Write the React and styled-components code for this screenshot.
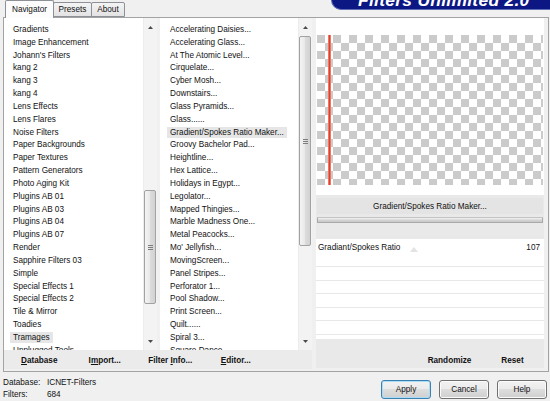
import React from "react";
import styled, { createGlobalStyle } from "styled-components";

const GlobalStyle = createGlobalStyle`
  html, body {
    margin: 0;
    padding: 0;
    background: #f0f0f0;
  }
  body {
    font-family: "Liberation Sans", Arial, sans-serif;
    font-size: 8.2px;
    color: #111;
  }
`;

const categories = [
  "Gradients",
  "Image Enhancement",
  "Johann's Filters",
  "kang 2",
  "kang 3",
  "kang 4",
  "Lens Effects",
  "Lens Flares",
  "Noise Filters",
  "Paper Backgrounds",
  "Paper Textures",
  "Pattern Generators",
  "Photo Aging Kit",
  "Plugins AB 01",
  "Plugins AB 03",
  "Plugins AB 04",
  "Plugins AB 07",
  "Render",
  "Sapphire Filters 03",
  "Simple",
  "Special Effects 1",
  "Special Effects 2",
  "Tile & Mirror",
  "Toadies",
  "Tramages",
  "Unplugged Tools",
];

const filters = [
  "Accelerating Daisies...",
  "Accelerating Glass...",
  "At The Atomic Level...",
  "Cirquelate...",
  "Cyber Mosh...",
  "Downstairs...",
  "Glass Pyramids...",
  "Glass......",
  "Gradient/Spokes Ratio Maker...",
  "Groovy Bachelor Pad...",
  "Heightline...",
  "Hex Lattice...",
  "Holidays in Egypt...",
  "Legolator...",
  "Mapped Thingies...",
  "Marble Madness One...",
  "Metal Peacocks...",
  "Mo' Jellyfish...",
  "MovingScreen...",
  "Panel Stripes...",
  "Perforator 1...",
  "Pool Shadow...",
  "Print Screen...",
  "Quilt......",
  "Spiral 3...",
  "Square Dance...",
];

const Window = styled.div`
  width: 550px;
  height: 401px;
  overflow: hidden;
  background: #f0f0f0;
  display: flex;
  flex-direction: column;
`;

const TopBar = styled.div`
  height: 17px;
  display: flex;
  padding-left: 5px;
  position: relative;
  z-index: 1;
`;

const Tabs = styled.div`
  display: flex;
  align-items: flex-end;
  height: 17px;
`;

const Tab = styled.div`
  box-sizing: border-box;
  width: ${(p) => p.$w}px;
  height: ${(p) => (p.$active ? 18 : 15)}px;
  margin-bottom: ${(p) => (p.$active ? -1 : 0)}px;
  margin-left: ${(p) => (p.$first ? 0 : -1)}px;
  border: 1px solid #8d9096;
  border-bottom: ${(p) => (p.$active ? "none" : "1px solid #8d9096")};
  border-radius: 2px 2px 0 0;
  background: ${(p) =>
    p.$active ? "#fcfcfc" : "linear-gradient(#f4f4f4, #e3e3e3)"};
  display: flex;
  align-items: center;
  justify-content: center;
  padding-bottom: ${(p) => (p.$active ? 1 : 0)}px;
  font-size: 8.2px;
  color: #111;
`;

const Banner = styled.div`
  margin-left: auto;
  width: 219px;
  height: 10px;
  overflow: hidden;
  box-sizing: border-box;
  background: #0c1783;
  border-bottom: 1px solid #5f6cb6;
  border-left: 1px solid #5f6cb6;
  border-bottom-left-radius: 10px;
  padding-left: 26px;
`;

const BannerText = styled.div`
  margin-top: -8px;
  font-family: "Liberation Sans", Arial, sans-serif;
  font-weight: 700;
  font-style: italic;
  font-size: 17.4px;
  line-height: 1;
  letter-spacing: 0.3px;
  color: #fff;
  white-space: nowrap;
`;

const Frame = styled.div`
  box-sizing: border-box;
  margin-left: 3px;
  width: 546px;
  height: 355px;
  border: 1px solid #a3a3a3;
  background: #f0f0f0;
  display: flex;
  padding-right: 3px;
`;

const LeftPane = styled.div`
  width: 308px;
  display: flex;
  flex-direction: column;
`;

const Lists = styled.div`
  height: 332px;
  display: flex;
  gap: 3px;
`;

const ListBox = styled.div`
  width: ${(p) => p.$w}px;
  display: flex;
  background: #fff;
`;

const List = styled.div`
  flex: 1;
  overflow: hidden;
  padding: 6px 0 0 ${(p) => p.$pad}px;
`;

const Item = styled.div`
  height: 12.83px;
  line-height: 12.83px;
  white-space: nowrap;
`;

const ItemLabel = styled.span`
  padding: 1px 3px;
  margin-left: -3px;
  background: ${(p) => (p.$sel ? "#e6e6e6" : "transparent")};
`;

const Track = styled.div`
  width: 14px;
  display: flex;
  flex-direction: column;
  background: #f3f3f3;
  border-left: 1px solid #ececec;
  box-sizing: border-box;
`;

const Arrow = styled.div`
  height: 18px;
  display: flex;
  align-items: center;
  justify-content: center;
`;

const ThumbSpace = styled.div`
  height: ${(p) => p.$h}px;
`;

const Thumb = styled.div`
  box-sizing: border-box;
  height: ${(p) => p.$h}px;
  margin: 0 1px 0 0;
  border: 1px solid #a2a2a2;
  border-radius: 2px;
  background: linear-gradient(to right, #f4f4f4, #e8e8e8 50%, #dcdcdc 51%, #d2d2d2);
  display: flex;
  align-items: center;
  justify-content: center;
`;

const Grip = styled.div`
  width: 5px;
  height: 5px;
  background: repeating-linear-gradient(#7d7d7d 0 1px, transparent 1px 2px);
`;

const Rest = styled.div`
  flex: 1;
`;

const ActionBar = styled.div`
  height: 19px;
  display: grid;
  grid-template-columns: repeat(4, 65.5px);
  padding-left: 2.5px;
  background: #ebebeb;
  align-items: center;
`;

const ActionButton = styled.div`
  text-align: center;
  font-weight: 700;
  font-size: 8.2px;
  line-height: 19px;
  padding-top: 1px;
  color: #111;
  white-space: nowrap;
`;

const Key = styled.span`
  text-decoration: underline;
`;

const RightPane = styled.div`
  margin-left: 4px;
  width: 228px;
  height: 350px;
  display: flex;
  flex-direction: column;
`;

const Preview = styled.div`
  height: 177px;
  box-sizing: border-box;
  background: #fff;
  padding: 17px 1px 0 1px;
`;

const Checker = styled.div`
  height: 150px;
  display: flex;
  background: repeating-conic-gradient(#fff 0 25%, #cbcbcb 0 50%) 0 0 / 16px 16px;
`;

const RedLine = styled.div`
  width: 3px;
  margin: 0 0 0 11px;
  height: 150px;
  background: linear-gradient(to right, #f7927f, #e2402e, #f7927f);
`;

const ControlArea = styled.div`
  height: 44px;
  box-sizing: border-box;
  background: #e9e9e9;
  padding: 3px 1px 0 1px;
  display: flex;
  flex-direction: column;
`;

const FilterButton = styled.div`
  height: 16px;
  line-height: 17px;
  text-align: center;
  background: #e4e4e4;
  color: #111;
`;

const SliderTrack = styled.div`
  margin-top: 3px;
  height: 6px;
  box-sizing: border-box;
  border: 1px solid #a9a9a9;
  border-top-color: #c4c4c4;
  border-radius: 1px;
  background: linear-gradient(#f2f2f2, #d2d2d2 60%, #c8c8c8);
`;

const Params = styled.div`
  height: 100px;
  overflow: hidden;
  background: #fff;
`;

const ParamHead = styled.div`
  position: relative;
  height: 27px;
  box-sizing: border-box;
  padding: 2px 4px 0 2px;
`;

const ParamLine = styled.div`
  display: flex;
  justify-content: space-between;
  height: 13px;
  line-height: 13px;
`;

const ParamThumb = styled.div`
  position: absolute;
  left: 94px;
  top: 8px;
  width: 0;
  height: 0;
  border-left: 4px solid transparent;
  border-right: 4px solid transparent;
  border-bottom: 5px solid #e3e3e3;
`;

const ParamRow = styled.div`
  height: 13.6px;
  box-sizing: border-box;
  border-top: 1px solid #e8e8e8;
`;

const ParamBar = styled.div`
  height: 29px;
  background: #e9e9e9;
  display: flex;
  justify-content: flex-end;
  align-items: flex-end;
  padding-bottom: 1px;
  box-sizing: border-box;
`;

const BarButton = styled.div`
  width: 63px;
  line-height: 12px;
  text-align: center;
  font-weight: 700;
  color: #111;
`;

const Footer = styled.div`
  height: 29px;
  display: flex;
  padding: 0 3px;
`;

const Status = styled.div`
  padding-top: 5px;
  display: grid;
  grid-template-columns: 44px auto;
  grid-auto-rows: 12px;
  line-height: 12px;
`;

const Buttons = styled.div`
  margin-left: auto;
  margin-top: 8px;
  display: flex;
  gap: 8px;
`;

const DialogButton = styled.div`
  box-sizing: border-box;
  width: 50px;
  height: 19px;
  border: 1px solid ${(p) => (p.$default ? "#3c7fb1" : "#707070")};
  box-shadow: ${(p) => (p.$default ? "inset 0 0 0 1px #a8dcf7" : "inset 0 0 0 1px #fbfbfb")};
  border-radius: 3px;
  background: linear-gradient(#f2f2f2 0%, #ebebeb 45%, #dddddd 50%, #cfcfcf 100%);
  display: flex;
  align-items: center;
  justify-content: center;
  color: #111;
`;

const ArrowIcon = ({ down }) => (
  <svg width="5" height="3" viewBox="0 0 5 3">
    <path d={down ? "M0 0 L5 0 L2.5 3Z" : "M0 3 L2.5 0 L5 3Z"} fill="#4a4a4a" />
  </svg>
);

const ScrollBar = ({ offset, size }) => (
  <Track>
    <Arrow>
      <ArrowIcon />
    </Arrow>
    <ThumbSpace $h={offset} />
    <Thumb $h={size}>
      <Grip />
    </Thumb>
    <Rest />
    <Arrow>
      <ArrowIcon down />
    </Arrow>
  </Track>
);

const ItemList = ({ items, selected, pad }) => (
  <List $pad={pad}>
    {items.map((name) => (
      <Item key={name}>
        <ItemLabel $sel={name === selected}>{name}</ItemLabel>
      </Item>
    ))}
  </List>
);

export default function App() {
  return (
    <>
      <GlobalStyle />
      <Window>
        <TopBar>
          <Tabs>
            <Tab $w={49} $active $first>
              Navigator
            </Tab>
            <Tab $w={39}>Presets</Tab>
            <Tab $w={34}>About</Tab>
          </Tabs>
          <Banner>
            <BannerText>Filters Unlimited 2.0</BannerText>
          </Banner>
        </TopBar>

        <Frame>
          <LeftPane>
            <Lists>
              <ListBox $w={153}>
                <ItemList items={categories} selected="Tramages" pad={9} />
                <ScrollBar offset={154} size={114} />
              </ListBox>
              <ListBox $w={152}>
                <ItemList
                  items={filters}
                  selected="Gradient/Spokes Ratio Maker..."
                  pad={10}
                />
                <ScrollBar offset={0} size={210} />
              </ListBox>
            </Lists>
            <ActionBar>
              <ActionButton>
                <Key>D</Key>atabase
              </ActionButton>
              <ActionButton>
                I<Key>m</Key>port...
              </ActionButton>
              <ActionButton>
                Filter <Key>I</Key>nfo...
              </ActionButton>
              <ActionButton>
                <Key>E</Key>ditor...
              </ActionButton>
            </ActionBar>
          </LeftPane>

          <RightPane>
            <Preview>
              <Checker>
                <RedLine />
              </Checker>
            </Preview>
            <ControlArea>
              <FilterButton>Gradient/Spokes Ratio Maker...</FilterButton>
              <SliderTrack />
            </ControlArea>
            <Params>
              <ParamHead>
                <ParamLine>
                  <span>Gradiant/Spokes Ratio</span>
                  <span>107</span>
                </ParamLine>
                <ParamThumb />
              </ParamHead>
              {[0, 1, 2, 3, 4, 5].map((i) => (
                <ParamRow key={i} />
              ))}
            </Params>
            <ParamBar>
              <BarButton>Randomize</BarButton>
              <BarButton>Reset</BarButton>
            </ParamBar>
          </RightPane>
        </Frame>

        <Footer>
          <Status>
            <span>Database:</span>
            <span>ICNET-Filters</span>
            <span>Filters:</span>
            <span>684</span>
          </Status>
          <Buttons>
            <DialogButton $default>Apply</DialogButton>
            <DialogButton>Cancel</DialogButton>
            <DialogButton>Help</DialogButton>
          </Buttons>
        </Footer>
      </Window>
    </>
  );
}
